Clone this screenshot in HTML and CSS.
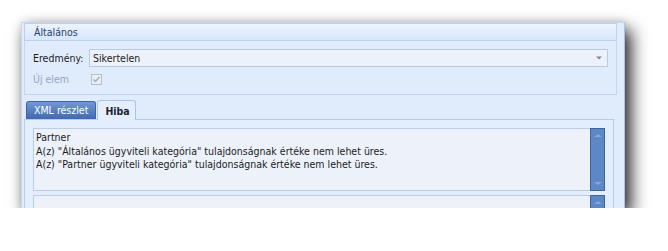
FILE: index.html
```html
<!DOCTYPE html>
<html lang="hu">

<head>
  <meta charset="UTF-8">
  <title>Hiba részletek</title>
  <link rel="stylesheet" href="styles.css">
</head>

<body>
  <div class="window">
    <div class="group">
      <div class="group-title">Általános</div>
      <div class="group-body">
        <div class="field">
          <span class="label">Eredmény:</span>
          <div class="combo">
            <span class="value">Sikertelen</span>
            <svg class="combo-arrow" xmlns="http://www.w3.org/2000/svg" width="6" height="4" viewBox="0 0 6 4">
              <path d="M0 0.5H6L3 3.5Z" fill="#7d8796" />
            </svg>
          </div>
        </div>
        <div class="field disabled">
          <span class="label">Új elem</span>
          <span class="check">
            <svg xmlns="http://www.w3.org/2000/svg" width="11" height="11" viewBox="0 0 11 11">
              <rect x="0.5" y="0.5" width="10" height="10" fill="#e9eef6" stroke="#b4c0d2" />
              <path d="M2.5 5.5L4.5 7.5L8.5 3" fill="none" stroke="#a3aebf" stroke-width="1.3" />
            </svg>
          </span>
        </div>
      </div>
    </div>

    <div class="tabs">
      <div class="tab-strip">
        <span class="tab">XML részlet</span>
        <span class="tab selected">Hiba</span>
      </div>
      <div class="tab-page">
        <div class="memo">
          <div class="memo-text">
            Partner<br>
            A(z) "Általános ügyviteli kategória" tulajdonságnak értéke nem lehet üres.<br>
            A(z) "Partner ügyviteli kategória" tulajdonságnak értéke nem lehet üres.
          </div>
          <div class="scrollbar">
            <span class="arrow up"></span>
            <span class="arrow down"></span>
          </div>
        </div>
        <div class="memo">
          <div class="memo-text"></div>
          <div class="scrollbar">
            <span class="arrow up"></span>
            <span class="arrow down"></span>
          </div>
        </div>
      </div>
    </div>
  </div>
</body>

</html>
```

FILE: styles.css
```css
* {
  box-sizing: border-box;
}

body {
  margin: 0;
  background: #fff;
  font-family: "DejaVu Sans Condensed", "DejaVu Sans", sans-serif;
  font-stretch: condensed;
  font-size: 10.5px;
  color: #1d1d1d;
}

.window {
  margin: 22px 0 0 21px;
  width: 604px;
  height: 186px;
  overflow: hidden;
  padding: 0 7px 0 2px;
  background: #e0ebfc;
  border: 1px solid #c4d7f2;
  border-right-color: #a9c3ea;
  border-bottom: none;
  box-shadow: 6px 8px 16px rgba(0, 0, 0, 0.85), 0 0 9px rgba(0, 0, 0, 0.12);
}

.group-title {
  height: 18px;
  padding-left: 9px;
  line-height: 17px;
  color: #22406b;
  background: linear-gradient(#ebf3fe, #d9e7fb);
  border: 1px solid #bcd1ef;
}

.group-body {
  display: flex;
  flex-direction: column;
  gap: 4px;
  padding: 8px 8px 7px 8px;
  border: 1px solid #c3d6f1;
  border-top: none;
}

.field {
  display: flex;
  align-items: center;
  height: 16px;
}

.field:first-child {
  height: 18px;
}

.field .label {
  width: 56px;
  flex: none;
}

.field.disabled .label {
  color: #95a6bf;
}

.combo {
  flex: 1;
  height: 18px;
  display: flex;
  align-items: center;
  justify-content: space-between;
  padding: 0 5px 0 3px;
  background: #edf1f9;
  border: 1px solid #b7c9e4;
}

.combo-arrow {
  display: block;
}

.check {
  display: flex;
  margin-left: 2px;
}

.tabs {
  margin: 4px 3px 0 0;
}

.tab-strip {
  display: flex;
  align-items: flex-end;
  height: 20px;
  padding-left: 2px;
}

.tab {
  height: 18px;
  padding: 0 7px;
  line-height: 17px;
  color: #fff;
  background: linear-gradient(#7299d3, #4169ad);
  border: 1px solid #3e64a4;
  border-bottom: none;
  border-radius: 3px 3px 0 0;
}

.tab.selected {
  height: 20px;
  margin-left: 1px;
  padding: 0 5px 0 7px;
  line-height: 20px;
  color: #1b2536;
  font-weight: 600;
  background: #e4eefd;
  border-color: #aac4ea;
  margin-bottom: -1px;
  position: relative;
}

.tab-page {
  display: flex;
  flex-direction: column;
  gap: 4px;
  height: 100px;
  padding: 8px 8px 0 8px;
  border: 1px solid #b5ccee;
  background: #e2edfd;
}

.memo {
  display: flex;
  height: 63px;
  flex: none;
  background: #edf2fa;
  border: 1px solid #bccde8;
  border-right: none;
}

.memo-text {
  flex: 1;
  padding: 2px 2px 0;
  line-height: 13.5px;
  color: #1b1b1b;
}

.scrollbar {
  width: 15px;
  margin: -1px 0;
  display: flex;
  flex-direction: column;
  justify-content: space-between;
  align-items: center;
  padding: 5px 0;
  background: #5c88c6;
  border: 1px solid #3f659f;
}

.arrow {
  width: 0;
  height: 0;
  border-left: 4px solid transparent;
  border-right: 4px solid transparent;
}

.arrow.up {
  border-bottom: 3px solid #86a7d6;
}

.arrow.down {
  border-top: 3px solid #86a7d6;
}
```
